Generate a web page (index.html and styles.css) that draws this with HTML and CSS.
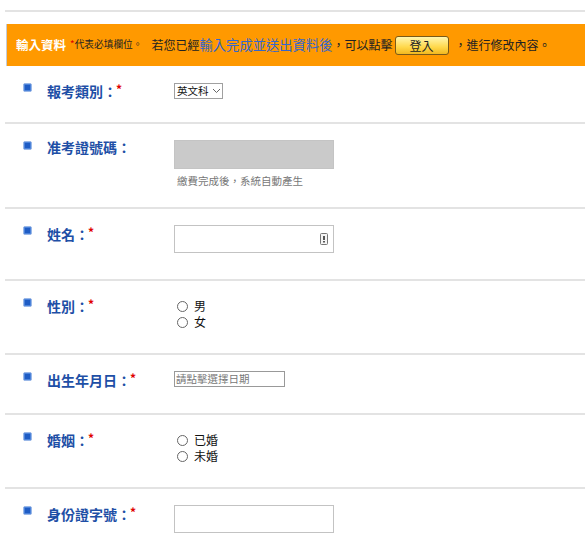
FILE: index.html
```html
<!DOCTYPE html>
<html lang="zh-Hant">
<head>
<meta charset="utf-8">
<title>輸入資料</title>
<link rel="stylesheet" href="styles.css">
</head>
<body>
<div class="page">
  <div class="topline"></div>
  <div class="notice">
    <span class="n-title">輸入資料</span>
    <span class="n-star">*</span><span class="n-small">代表必填欄位。</span>
    <span class="n-text">若您已經</span><span class="n-link">輸入完成並送出資料後</span><span class="n-text">，可以點擊</span>
    <button class="login" type="button">登入</button>
    <span class="n-text">，進行修改內容。</span>
  </div>

  <div class="row">
    <span class="bullet"></span>
    <div class="label">報考類別：<span class="req">*</span></div>
    <div class="ctrl">
      <span class="select">
        <select class="sel"><option>英文科</option></select>
        <svg class="chev" width="9" height="6" viewBox="0 0 9 6"><path d="M1 1 L4.5 4.5 L8 1" fill="none" stroke="#666" stroke-width="1"/></svg>
      </span>
    </div>
  </div>

  <div class="row">
    <span class="bullet"></span>
    <div class="label">准考證號碼：</div>
    <div class="ctrl">
      <div class="graybox"></div>
      <div class="hint">繳費完成後，系統自動產生</div>
    </div>
  </div>

  <div class="row">
    <span class="bullet"></span>
    <div class="label">姓名：<span class="req">*</span></div>
    <div class="ctrl">
      <span class="textbox">
        <input class="tb-input" type="text">
        <svg class="tb-icon" width="8" height="12" viewBox="0 0 8 12"><rect x="0.5" y="0.5" width="7" height="11" rx="1" fill="#f4f4f4" stroke="#777"/><rect x="3" y="3" width="2" height="4" fill="#555"/><rect x="3" y="8" width="2" height="1.5" fill="#555"/></svg>
      </span>
    </div>
  </div>

  <div class="row">
    <span class="bullet"></span>
    <div class="label">性別：<span class="req">*</span></div>
    <div class="ctrl radios">
      <label class="radio"><span class="circle"></span>男</label>
      <label class="radio"><span class="circle"></span>女</label>
    </div>
  </div>

  <div class="row">
    <span class="bullet"></span>
    <div class="label">出生年月日：<span class="req">*</span></div>
    <div class="ctrl">
      <input class="date" type="text" placeholder="請點擊選擇日期">
    </div>
  </div>

  <div class="row">
    <span class="bullet"></span>
    <div class="label">婚姻：<span class="req">*</span></div>
    <div class="ctrl radios">
      <label class="radio"><span class="circle"></span>已婚</label>
      <label class="radio"><span class="circle"></span>未婚</label>
    </div>
  </div>

  <div class="row last">
    <span class="bullet"></span>
    <div class="label">身份證字號：<span class="req">*</span></div>
    <div class="ctrl">
      <span class="textbox"><input class="tb-input" type="text"></span>
    </div>
  </div>
</div>
</body>
</html>
```

FILE: styles.css
```css
html, body {
  margin: 0;
  padding: 0;
  background: #fff;
}
body {
  font-family: "Noto Sans CJK TC", "Liberation Sans", sans-serif;
  color: #222;
  overflow: hidden;
}
.page {
  padding: 10px 0 0 5px;
  width: 600px;
}
.topline {
  height: 2px;
  background: #e3e3e3;
}
.notice {
  margin: 12px 0 0 1px;
  height: 42px;
  background: #ff9900;
  border-left: 1px solid #c5cbd6;
  display: flex;
  align-items: center;
  padding-left: 9px;
  white-space: nowrap;
  line-height: 1;
}
.n-title {
  color: #fff;
  font-weight: bold;
  font-size: 12.5px;
}
.n-star {
  color: #e00000;
  font-size: 10px;
  align-self: flex-start;
  margin-top: 15px;
  margin-left: 4px;
}
.n-small {
  font-size: 9.7px;
  color: #222;
  margin-right: 9px;
}
.n-text {
  font-size: 12px;
  color: #222;
}
.n-link {
  font-size: 13.3px;
  color: #3366cc;
}
.login {
  margin: 0 6px 0 2px;
  width: 54px;
  height: 19px;
  padding: 0;
  border: 1px solid #7a5a18;
  border-radius: 3px;
  background: linear-gradient(#fff6b0, #ffd84a 60%, #f2b820);
  font-family: "Noto Sans CJK TC", sans-serif;
  font-size: 12px;
  color: #222;
  line-height: 17px;
}
.row {
  display: flex;
  align-items: flex-start;
  padding: 16px 0 0 18px;
  border-bottom: 2px solid #e3e3e3;
}
.row:nth-of-type(3) { height: 40px; }
.row:nth-of-type(4) { height: 67px; }
.row:nth-of-type(5) { height: 54px; }
.row:nth-of-type(6) { height: 56px; }
.row:nth-of-type(7) { height: 42px; }
.row:nth-of-type(8) { height: 56px; }
.row.last { border-bottom: none; height: 60px; }
.bullet {
  width: 7px;
  height: 7px;
  margin-top: 1px;
  border: 1px solid #9ab8e8;
  border-radius: 2px;
  background: #1f5cc4;
  box-shadow: inset 0 0 0 1px #4a82da;
  flex: none;
}
.label {
  width: 127px;
  margin-left: 15px;
  flex: none;
  font-size: 14px;
  font-weight: bold;
  color: #1e4fa6;
  line-height: 18px;
  margin-top: -2px;
  white-space: nowrap;
}
.req {
  color: #e00000;
  font-size: 12px;
  vertical-align: 3px;
  margin-left: -1px;
}
.ctrl {
  flex: none;
  display: flex;
  flex-direction: column;
  align-items: flex-start;
}
.select {
  display: flex;
  align-items: center;
  width: 47px;
  height: 14px;
  border: 1px solid #a0a0a0;
  background: #fff;
  margin-top: 1px;
}
.sel {
  appearance: none;
  -webkit-appearance: none;
  border: none;
  background: transparent;
  font-family: "Noto Sans CJK TC", sans-serif;
  font-size: 10.5px;
  color: #111;
  padding: 0 0 0 2px;
  margin: 0;
  width: 37px;
  height: 14px;
  line-height: 14px;
  outline: none;
}
.graybox {
  width: 158px;
  height: 27px;
  background: #cacaca;
  border: 1px solid #c4c4c4;
}
.hint {
  margin-top: 5px;
  margin-left: 3px;
  font-size: 10.5px;
  color: #777;
  line-height: 14px;
}
.textbox {
  display: flex;
  align-items: center;
  width: 158px;
  height: 26px;
  border: 1px solid #c3c3c3;
  background: #fff;
}
.tb-input {
  border: none;
  outline: none;
  flex: 1;
  min-width: 0;
  height: 24px;
  padding: 0 4px;
  background: transparent;
}
.tb-icon {
  margin-right: 5px;
  flex: none;
}
.radios {
  padding-left: 3px;
  margin-top: 1px;
}
.radio {
  display: flex;
  align-items: center;
  height: 16px;
  font-size: 12px;
  color: #111;
  line-height: 16px;
}
.circle {
  width: 9px;
  height: 9px;
  border: 1px solid #666;
  border-radius: 50%;
  background: #fff;
  margin-right: 6px;
}
.date {
  display: block;
  width: 108px;
  height: 14px;
  box-sizing: content-box;
  border: 1px solid #999;
  padding: 0 0 0 1px;
  margin: 0;
  font-family: "Noto Sans CJK TC", sans-serif;
  font-size: 10.5px;
  line-height: 14px;
  outline: none;
}
.date::placeholder {
  color: #777;
}
```
